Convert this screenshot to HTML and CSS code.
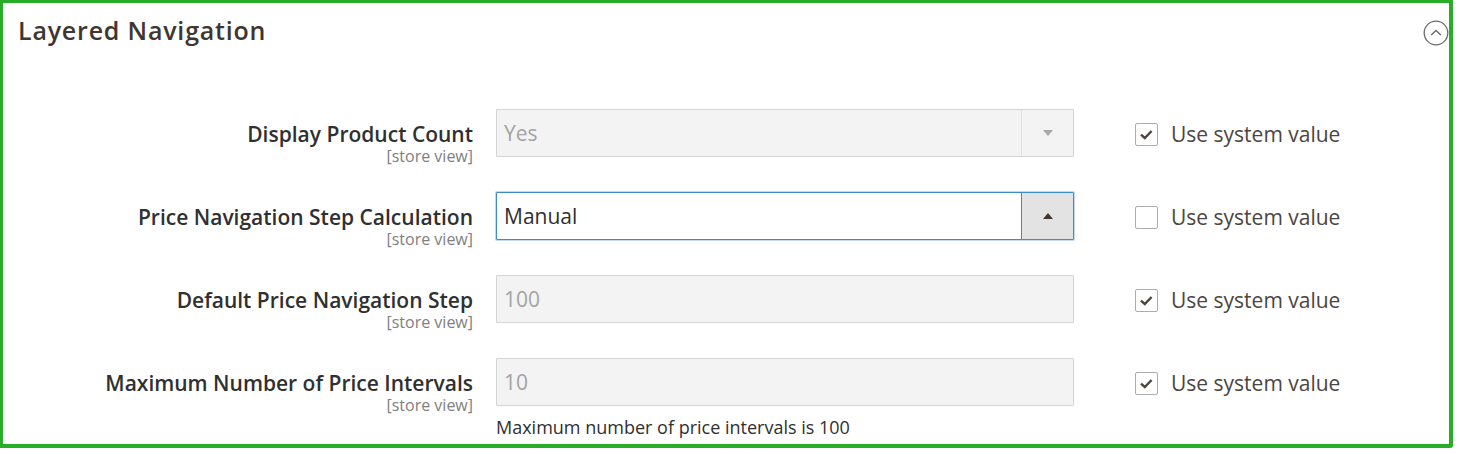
FILE: index.html
```html
<!DOCTYPE html>
<html lang="en">
<head>
    <meta charset="UTF-8">
    <meta name="viewport" content="width=device-width, initial-scale=1.0">
    <title>Layered Navigation</title>
    <link rel="stylesheet" href="styles.css">
</head>
<body>
    <div class="section">
        <div class="section-head">
            <h2>Layered Navigation</h2>
            <svg class="toggle" width="26" height="26" viewBox="0 0 26 26">
                <circle cx="13" cy="13" r="11.8" fill="none" stroke="#6b6b6b" stroke-width="1.3"/>
                <path d="M8.2 15 L13 10.4 L17.8 15" fill="none" stroke="#6b6b6b" stroke-width="1.4"/>
            </svg>
        </div>

        <div class="fields">
            <div class="field">
                <div class="label">
                    <span class="name">Display Product Count</span>
                    <span class="scope">[store view]</span>
                </div>
                <div class="control">
                    <div class="select disabled">
                        <span class="value">Yes</span>
                        <span class="btn"><i class="arrow down"></i></span>
                    </div>
                </div>
                <div class="use-default">
                    <span class="box">
                        <svg width="21" height="21" viewBox="0 0 21 21"><path d="M5 10.6 L8.8 14 L15.6 7" fill="none" stroke="#4d4540" stroke-width="2.4"/></svg>
                    </span>
                    <span>Use system value</span>
                </div>
            </div>

            <div class="field">
                <div class="label">
                    <span class="name">Price Navigation Step Calculation</span>
                    <span class="scope">[store view]</span>
                </div>
                <div class="control">
                    <div class="select active">
                        <span class="value">Manual</span>
                        <span class="btn"><i class="arrow up"></i></span>
                    </div>
                </div>
                <div class="use-default">
                    <span class="box"></span>
                    <span>Use system value</span>
                </div>
            </div>

            <div class="field">
                <div class="label">
                    <span class="name">Default Price Navigation Step</span>
                    <span class="scope">[store view]</span>
                </div>
                <div class="control">
                    <div class="input disabled">100</div>
                </div>
                <div class="use-default">
                    <span class="box">
                        <svg width="21" height="21" viewBox="0 0 21 21"><path d="M5 10.6 L8.8 14 L15.6 7" fill="none" stroke="#4d4540" stroke-width="2.4"/></svg>
                    </span>
                    <span>Use system value</span>
                </div>
            </div>

            <div class="field">
                <div class="label">
                    <span class="name">Maximum Number of Price Intervals</span>
                    <span class="scope">[store view]</span>
                </div>
                <div class="control">
                    <div class="input disabled">10</div>
                    <p class="note">Maximum number of price intervals is 100</p>
                </div>
                <div class="use-default">
                    <span class="box">
                        <svg width="21" height="21" viewBox="0 0 21 21"><path d="M5 10.6 L8.8 14 L15.6 7" fill="none" stroke="#4d4540" stroke-width="2.4"/></svg>
                    </span>
                    <span>Use system value</span>
                </div>
            </div>
        </div>
    </div>
</body>
</html>
```

FILE: styles.css
```css
* {
    padding: 0;
    margin: 0;
    box-sizing: border-box;
}

body {
    background: #fff;
    font-family: "Open Sans", "Liberation Sans", sans-serif;
    color: #303030;
}

.section {
    width: 1453px;
    height: 448px;
    border: solid #27ad27;
    border-width: 3px 4px 4px 3px;
    border-radius: 0 0 3px 0;
    overflow: hidden;
}

.section-head {
    display: flex;
    justify-content: space-between;
    align-items: flex-start;
    padding: 11px 0 0 15px;
}

.section-head h2 {
    font-size: 25px;
    line-height: 32px;
    font-weight: 600;
    letter-spacing: 0.8px;
    color: #41362f;
}

.toggle {
    margin-top: 6px;
}

.fields {
    margin-top: 63px;
    display: flex;
    flex-direction: column;
    gap: 35px;
}

.field {
    display: flex;
    align-items: flex-start;
}

.label {
    width: 470px;
    height: 48px;
    padding-top: 13px;
    display: flex;
    flex-direction: column;
    align-items: flex-end;
}

.label .name {
    font-size: 21px;
    line-height: 24px;
    font-weight: 600;
    color: #303030;
}

.label .scope {
    margin-top: 2px;
    font-size: 16px;
    line-height: 16px;
    color: #808080;
}

.control {
    width: 578px;
    margin-left: 23px;
}

.select,
.input {
    height: 48px;
    display: flex;
    align-items: center;
    font-size: 21px;
    border: 1px solid #d4d4d4;
    border-radius: 1px;
}

.select .value,
.input {
    padding-left: 7px;
}

.select .value {
    flex: 1;
}

.disabled {
    background: #f3f3f3;
    color: #a3a3a3;
}

.btn {
    width: 52px;
    height: 100%;
    border-left: 1px solid #dedede;
    display: flex;
    align-items: center;
    justify-content: center;
}

.active {
    background: #fff;
    color: #303030;
    border-color: #3b8ccf;
    box-shadow: 0 0 0 1px rgba(110, 170, 225, 0.45);
}

.active .btn {
    background: #e3e3e3;
    border-left: 1px solid #3b8ccf;
}

.arrow {
    width: 0;
    height: 0;
    border-left: 5px solid transparent;
    border-right: 5px solid transparent;
}

.arrow.down {
    border-top: 6px solid #a8a8a8;
}

.arrow.up {
    border-bottom: 6px solid #41362f;
}

.note {
    margin-top: 10px;
    font-size: 18px;
    line-height: 22px;
    color: #303030;
}

.use-default {
    margin-left: 61px;
    padding-top: 13px;
    display: flex;
    align-items: flex-start;
    gap: 13px;
    font-size: 21px;
    line-height: 24px;
    color: #4d4540;
}

.box {
    width: 23px;
    height: 23px;
    margin-top: 1px;
    border: 1px solid #adadad;
    border-radius: 2px;
    background: #fff;
    display: flex;
    align-items: center;
    justify-content: center;
}
```
